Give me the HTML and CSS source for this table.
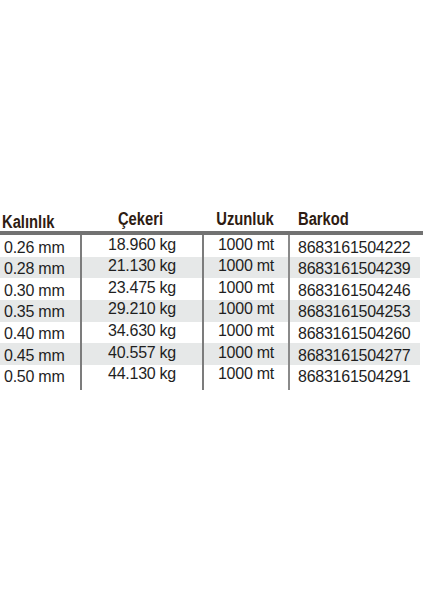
FILE: index.html
```html
<!DOCTYPE html>
<html lang="tr">
<head>
<meta charset="utf-8">
<title>Tablo</title>
<link rel="stylesheet" href="styles.css">
</head>
<body>
<div class="table">
  <div class="head">
    <div class="h h1"><span class="ht">Kalınlık</span></div>
    <div class="h h2"><span class="ht">Çekeri</span></div>
    <div class="h h3"><span class="ht">Uzunluk</span></div>
    <div class="h h4"><span class="ht">Barkod</span></div>
  </div>
  <div class="bar"></div>
  <div class="row"><div class="c c1">0.26 mm</div><div class="c c2">18.960 kg</div><div class="c c3">1000 mt</div><div class="c c4">8683161504222</div></div>
  <div class="row alt"><div class="c c1">0.28 mm</div><div class="c c2">21.130 kg</div><div class="c c3">1000 mt</div><div class="c c4">8683161504239</div></div>
  <div class="row"><div class="c c1">0.30 mm</div><div class="c c2">23.475 kg</div><div class="c c3">1000 mt</div><div class="c c4">8683161504246</div></div>
  <div class="row alt"><div class="c c1">0.35 mm</div><div class="c c2">29.210 kg</div><div class="c c3">1000 mt</div><div class="c c4">8683161504253</div></div>
  <div class="row"><div class="c c1">0.40 mm</div><div class="c c2">34.630 kg</div><div class="c c3">1000 mt</div><div class="c c4">8683161504260</div></div>
  <div class="row alt"><div class="c c1">0.45 mm</div><div class="c c2">40.557 kg</div><div class="c c3">1000 mt</div><div class="c c4">8683161504277</div></div>
  <div class="row"><div class="c c1">0.50 mm</div><div class="c c2">44.130 kg</div><div class="c c3">1000 mt</div><div class="c c4">8683161504291</div></div>
  <div class="row tail"><div class="c c1"></div><div class="c c2"></div><div class="c c3"></div><div class="c c4"></div></div>
</div>
</body>
</html>
```
FILE: styles.css
```css
html, body {
  margin: 0;
  padding: 0;
  background: #ffffff;
}
body {
  width: 424px;
  height: 600px;
  overflow: hidden;
}
.table {
  padding-top: 209px;
}
.head {
  display: grid;
  grid-template-columns: 80px 122px 86px 1fr;
  height: 22px;
}
.h {
  font-family: "Liberation Sans", Arial, sans-serif;
  font-weight: bold;
  font-size: 18px;
  line-height: 20px;
  color: #2e1c12;
  white-space: nowrap;
}
.ht {
  display: inline-block;
  transform: scaleX(0.82);
  transform-origin: center;
}
.h1 .ht, .h4 .ht {
  transform-origin: left;
}
.h1 { padding-left: 2px; padding-top: 3px; }
.h2 { text-align: center; }
.h3 { text-align: center; }
.h4 { padding-left: 10px; }
.bar {
  height: 4px;
  background: #727272;
  margin-right: 1px;
}
.row {
  display: grid;
  grid-template-columns: 80px 122px 86px 1fr;
  height: 21.67px;
  margin-right: 4px;
}
.row.alt {
  background: #e6e8e8;
}
.row.tail {
  height: 3px;
}
.c {
  font-family: "Liberation Sans", Arial, sans-serif;
  font-size: 16px;
  letter-spacing: -0.25px;
  line-height: 18px;
  color: #1f1f1f;
  white-space: nowrap;
}
.c2, .c3, .c4 {
  border-left: 2px solid #7c7c7c;
}
.c1 { padding-left: 4px; padding-top: 3.5px; }
.c2 { text-align: center; padding-top: 0.5px; }
.c3 { text-align: center; padding-top: 0.5px; }
.c4 { padding-left: 8px; padding-top: 3.5px; border-left-color: #8a8a8a; }
.tail .c { padding-top: 0; line-height: 3px; }
```
